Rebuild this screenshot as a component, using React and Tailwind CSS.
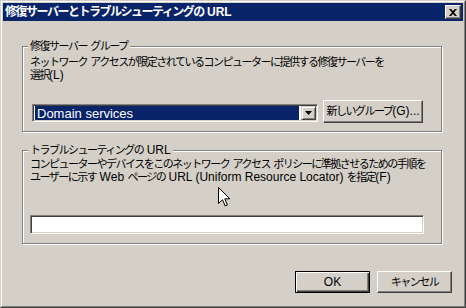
import React from 'react';

const jp = { fontFamily: '"Liberation Sans", "Noto Sans CJK JP", sans-serif' };

function L({ children }) {
  // latin runs keep normal spacing, a bit larger like Tahoma
  return <span className="text-[12px] tracking-normal">{children}</span>;
}

function GroupBox({ label, height, className = '', children }) {
  return (
    <div
      className={`ml-[19px] w-[420px] border border-[#808080] shadow-[inset_1px_1px_0_#fff,1px_1px_0_#fff] ${height} ${className}`}
    >
      <div className="-mt-[7px] ml-[5px] w-fit bg-[#d4d0c8] px-[2px] leading-[13px]">
        {label}
      </div>
      {children}
    </div>
  );
}

export default function App() {
  return (
    <div
      className="h-[308px] w-[466px] overflow-hidden bg-[#d4d0c8] text-[11px] tracking-[-1.5px] text-black"
      style={jp}
    >
      <div className="relative h-full border border-t-[#d4d0c8] border-l-[#d4d0c8] border-r-[#404040] border-b-[#404040]">
        <div className="h-full border border-t-white border-l-white border-r-[#808080] border-b-[#808080] p-[1px]">
          {/* title bar */}
          <div className="flex h-[18px] items-center justify-between bg-[#0a246a] pl-[2px] pr-[2px]">
            <span className="text-[12px] font-bold leading-[14px] text-white">
              修復サーバーとトラブルシューティングの<span className="tracking-normal"> URL</span>
            </span>
            <button className="flex h-[14px] w-[16px] items-center justify-center border border-t-white border-l-white border-r-[#404040] border-b-[#404040] bg-[#d4d0c8] shadow-[inset_-1px_-1px_0_#808080]">
              <svg width="8" height="7" viewBox="0 0 8 7">
                <path d="M0 0h2l2 2 2-2h2L5 3.5 8 7H6L4 5 2 7H0l3-3.5z" fill="#000" />
              </svg>
            </button>
          </div>

          <GroupBox label={<>修復サーバー<L> </L>グループ</>} height="h-[86px]" className="mt-[25px]">
            <p className="ml-[7px] mt-[3px] whitespace-nowrap leading-[13px]">
              ネットワーク<L> </L>アクセスが限定されているコンピューターに提供する修復サーバーを
              <br />
              選択<L>(L)</L>
            </p>
            <div className="mt-[18px] flex items-start">
              <div className="ml-[9px] mt-[4px] flex h-[18px] w-[286px] items-center border border-t-[#808080] border-l-[#808080] border-r-white border-b-white bg-white p-[1px] shadow-[inset_1px_1px_0_#404040,inset_-1px_-1px_0_#d4d0c8]">
                <div className="ml-[1px] flex h-[14px] flex-1 items-center bg-[#0a246a] pl-[2px] text-[13px] leading-[13px] tracking-normal text-white">
                  Domain services
                </div>
                <div className="ml-[2px] flex h-[14px] w-[15px] items-center justify-center border border-t-[#d4d0c8] border-l-[#d4d0c8] border-r-[#404040] border-b-[#404040] bg-[#d4d0c8] shadow-[inset_1px_1px_0_#fff,inset_-1px_-1px_0_#808080]">
                  <svg width="7" height="4" viewBox="0 0 7 4">
                    <path d="M0 0h7L3.5 4z" fill="#000" />
                  </svg>
                </div>
              </div>
              <button className="ml-[5px] h-[23px] w-[100px] border border-t-white border-l-white border-r-[#404040] border-b-[#404040] bg-[#d4d0c8] leading-[13px] shadow-[inset_-1px_-1px_0_#808080]">
                新しいグループ<L>(G)...</L>
              </button>
            </div>
          </GroupBox>

          <GroupBox label={<>トラブルシューティングの<L> URL</L></>} height="h-[94px]" className="mt-[18px]">
            <p className="ml-[7px] mt-[1px] whitespace-nowrap leading-[13px]">
              コンピューターやデバイスをこのネットワーク<L> </L>アクセス<L> </L>ポリシーに準拠させるための手順を
              <br />
              ユーザーに示す<L> Web </L>ページの<L> URL (Uniform Resource Locator) </L>を指定<L>(F)</L>
            </p>
            <div className="ml-[7px] mt-[31px] h-[19px] w-[394px] border border-t-[#808080] border-l-[#808080] border-r-white border-b-white bg-white shadow-[inset_1px_1px_0_#404040,inset_-1px_-1px_0_#d4d0c8]" />
          </GroupBox>

          <div className="mr-[11px] mt-[27px] flex justify-end gap-[7px]">
            <button className="h-[22px] w-[75px] border border-black bg-[#d4d0c8] leading-[13px] shadow-[inset_1px_1px_0_#fff,inset_-1px_-1px_0_#404040,inset_-2px_-2px_0_#808080]">
              <L>OK</L>
            </button>
            <button className="h-[22px] w-[75px] border border-t-white border-l-white border-r-[#404040] border-b-[#404040] bg-[#d4d0c8] leading-[13px] shadow-[inset_-1px_-1px_0_#808080]">
              キャンセル
            </button>
          </div>
        </div>

        {/* mouse pointer */}
        <svg
          className="absolute left-[217px] top-[186px]"
          width="13"
          height="20"
          viewBox="0 0 13 20"
        >
          <path
            d="M0.5 0.5V16.5L4.5 12.7L7.2 19L9.4 18L6.8 11.8H11.8Z"
            fill="#fff"
            stroke="#000"
            strokeWidth="1"
          />
        </svg>
      </div>
    </div>
  );
}
